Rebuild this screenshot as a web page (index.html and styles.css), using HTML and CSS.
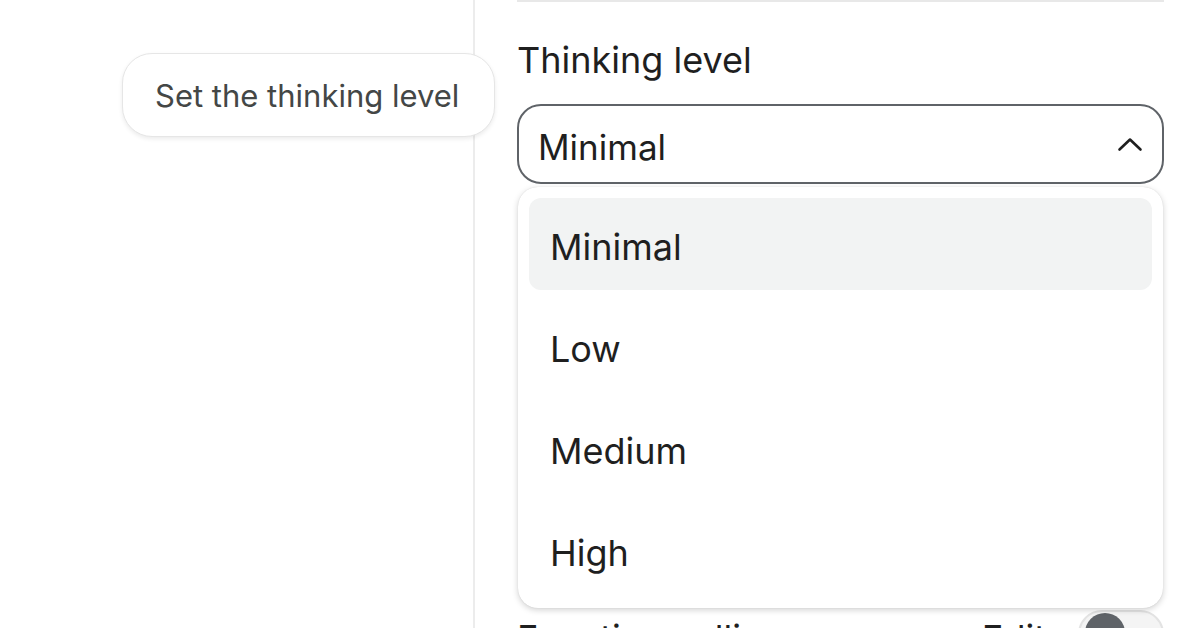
FILE: index.html
```html
<!DOCTYPE html>
<html>
<head>
<meta charset="utf-8">
<link rel="stylesheet" href="styles.css">
</head>
<body>
<div class="page">
  <div class="left">
    <div class="tooltip">Set the thinking level</div>
  </div>
  <div class="panel">
    <div class="topline"></div>
    <div class="field">
      <div class="label">Thinking level</div>
      <div class="select-wrap">
        <div class="select">
          <span class="value">Minimal</span>
          <svg class="chev" width="26" height="15" viewBox="0 0 26 15"><path d="M2.5 12.5L13 2.5l10.5 10" fill="none" stroke="#1f1f1f" stroke-width="2.6" stroke-linecap="round" stroke-linejoin="round"/></svg>
        </div>
        <div class="menu">
          <div class="item active">Minimal</div>
          <div class="item">Low</div>
          <div class="item">Medium</div>
          <div class="item">High</div>
        </div>
      </div>
    </div>
    <div class="row">
      <span class="row-label">Function calling</span>
      <span class="row-right"><span class="edit">Edit</span><span class="toggle"><span class="knob"></span></span></span>
    </div>
  </div>
</div>
</body>
</html>
```
FILE: styles.css
```css
html, body {
  margin: 0;
  padding: 0;
  background: #ffffff;
}
body {
  width: 1200px;
  height: 628px;
  overflow: hidden;
  font-family: Inter, "Noto Sans", sans-serif;
  color: #1f1f1f;
}
.page {
  display: flex;
  height: 628px;
  overflow: hidden;
}
.left {
  width: 473px;
  flex: none;
  border-right: 2px solid #ececec;
  position: relative;
}
.tooltip {
  position: absolute;
  left: 122px;
  top: 53px;
  height: 84px;
  box-sizing: border-box;
  padding: 0 35px 0 32px;
  display: flex;
  align-items: center;
  background: #fff;
  border: 1px solid #e6e6e6;
  border-radius: 30px;
  box-shadow: 0 2px 4px rgba(0,0,0,0.08);
  font-size: 31px;
  color: #444746;
  white-space: nowrap;
}
.panel {
  flex: 1;
  padding: 0 36px 0 42px;
  display: flex;
  flex-direction: column;
}
.topline {
  flex: none;
  height: 2px;
  background: #e8e8e8;
}
.field {
  flex: none;
  margin-top: 36px;
}
.label {
  font-size: 36px;
  line-height: 44px;
  color: #1f1f1f;
}
.select-wrap {
  position: relative;
  margin-top: 22px;
}
.select {
  height: 80px;
  box-sizing: border-box;
  border: 2px solid #5f6368;
  border-radius: 24px;
  display: flex;
  align-items: center;
  justify-content: space-between;
  padding: 6px 19px 0 19px;
  font-size: 35px;
}
.chev {
  display: block;
  margin-top: -6px;
}
.menu {
  position: absolute;
  left: 1px;
  right: 1px;
  top: 83px;
  background: #fff;
  border-radius: 20px;
  box-shadow: 0 2px 6px rgba(0,0,0,0.18), 0 0 1px rgba(0,0,0,0.15);
  padding: 11px 11px 12px 11px;
  display: flex;
  flex-direction: column;
  gap: 10px;
  z-index: 2;
}
.item {
  height: 92px;
  border-radius: 12px;
  display: flex;
  align-items: center;
  padding: 6px 21px 0;
  box-sizing: border-box;
  font-size: 36px;
  color: #1f1f1f;
}
.item.active {
  background: #f2f3f3;
}
.row {
  margin-top: 432px;
  display: flex;
  justify-content: space-between;
  align-items: flex-start;
  font-size: 36px;
  line-height: 44px;
  flex: none;
}
.row-right {
  display: flex;
  align-items: flex-start;
  gap: 32px;
}
.toggle {
  width: 86px;
  height: 48px;
  border-radius: 24px;
  border: 2px solid #e3e3e3;
  background: #f4f4f4;
  box-sizing: border-box;
  position: relative;
  margin-top: -6px;
}
.knob {
  position: absolute;
  left: 5px;
  top: 1px;
  width: 40px;
  height: 40px;
  border-radius: 50%;
  background: #5f6368;
}
```
